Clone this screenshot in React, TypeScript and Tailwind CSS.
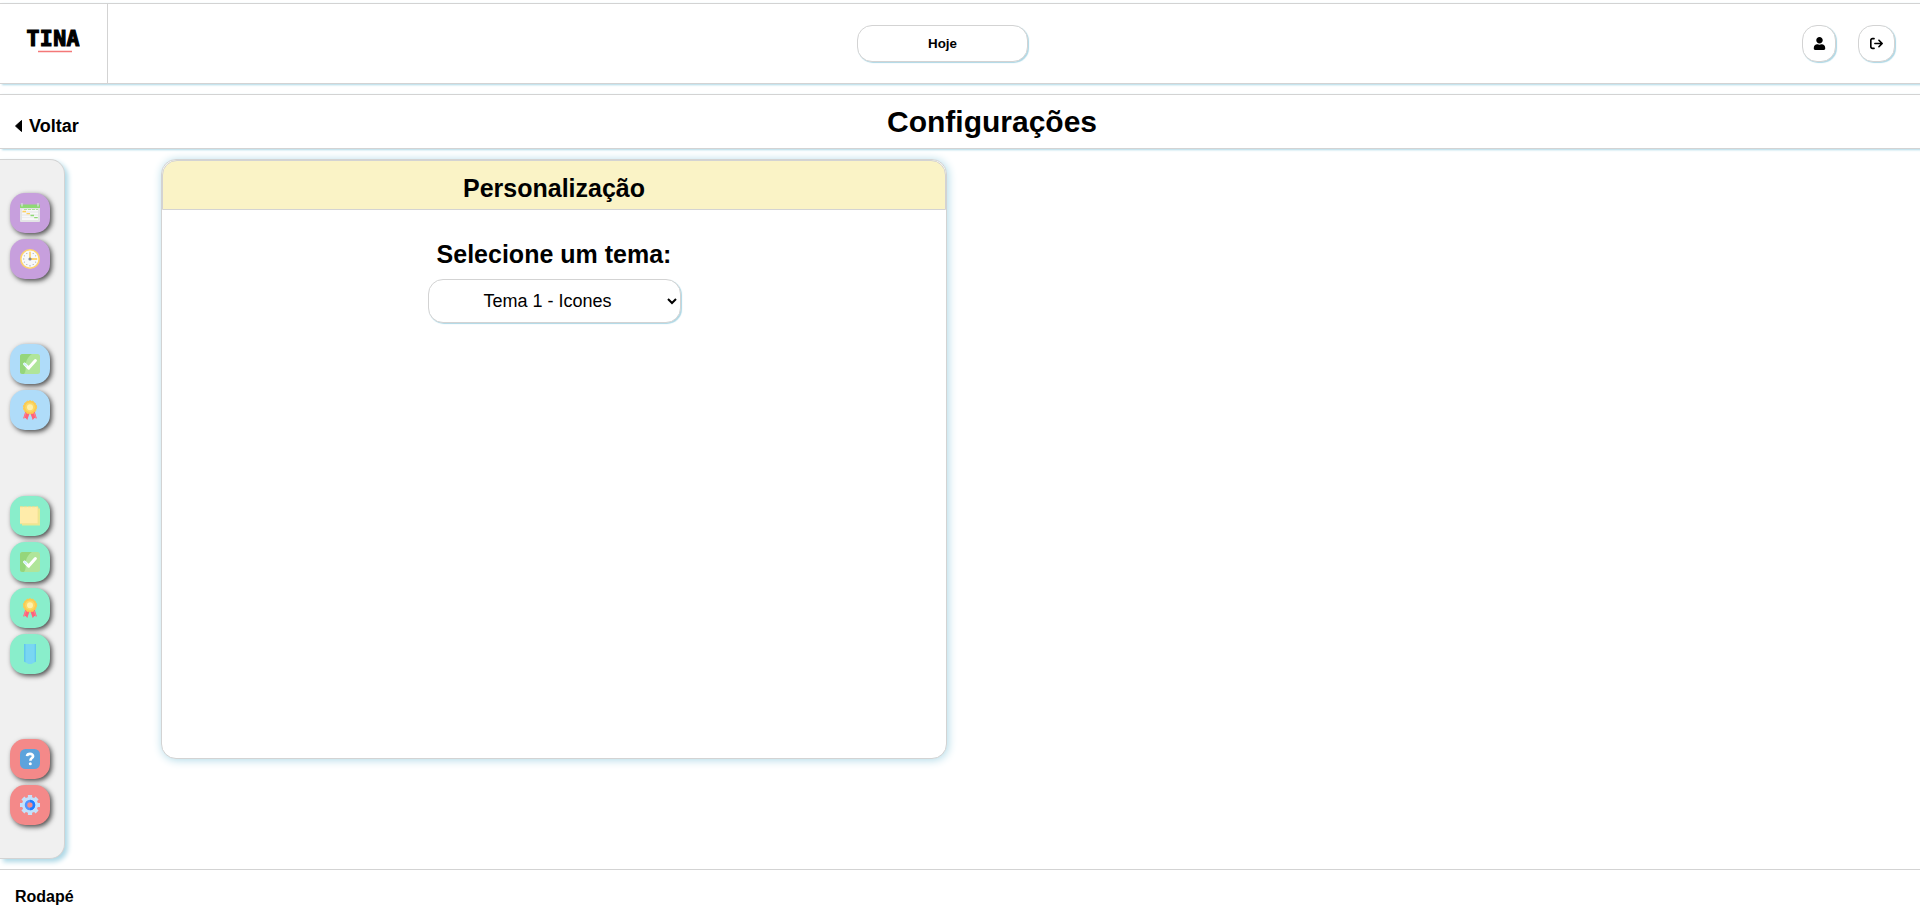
import type { ReactNode } from "react";
import { FaUser } from "react-icons/fa";
import { FaArrowRightFromBracket } from "react-icons/fa6";

const CalendarIcon = () => (
  <svg viewBox="0 0 20 20" className="size-5">
    <rect y="2" width="20" height="17" rx="1" fill="#e3e4e6" />
    <path d="M2 7.500h16M2 10.500h16M2 13.500h16M2 16h16" stroke="#f7f7f8" strokeWidth="1.800" />
    <rect y="1.500" width="20" height="3.500" rx=".5" fill="#8fd975" />
    <path d="M2 0v3.500M18 0v3.500" stroke="#d9dde0" strokeWidth="1.300" />
    <path d="M4 6.500h3M8 6.500h3M12 6.500h3M16 6.500h2" stroke="#9cdd84" strokeWidth=".800" />
    <path d="M2.500 8.500h3.500M6.500 10.700h3.500" stroke="#ffd15c" strokeWidth="1.300" />
    <path d="M10.500 12.500h3.500M14.200 14.600h3.500" stroke="#8fd975" strokeWidth="1.300" />
  </svg>
);

const ClockIcon = () => (
  <svg viewBox="0 0 20 20" className="size-5">
    <circle cx="10" cy="10" r="9.2" fill="#f7f8fa" stroke="#ffd46b" strokeWidth="1.6" />
    <g stroke="#a9adb5" strokeWidth="1">
      <path d="M10 16v1.5M3 10h1.3M6.5 4l.6 1M3.9 6.5l1 .6M3.9 13.5l1-.6M6.5 16l.6-1M13.5 16l-.6-1M16.1 13.5l-1-.6M16.1 6.5l-1 .6M13.5 4l-.6 1" />
    </g>
    <path d="M10 2.7V10h7.2" fill="none" stroke="#ffc843" strokeWidth="1.3" />
    <circle cx="10" cy="10" r="1.6" fill="#868b98" />
  </svg>
);

const CheckIcon = () => (
  <svg viewBox="0 0 20 20" className="size-5">
    <rect width="20" height="20" rx="2.5" fill="#b0e59a" />
    <path d="M2.5 0H12C9 2 5.7 6 5.7 11c0 4 .2 7-1.7 9H2.5A2.5 2.5 0 0 1 0 17.5V2.5A2.5 2.5 0 0 1 2.5 0Z" fill="#95d67b" />
    <path d="m4.600 10 4.100 4.100 6.700-7.500" fill="none" stroke="#fff" strokeWidth="3" strokeLinecap="round" strokeLinejoin="round" />
    <path d="m4.400 9.700 1.900 1.900" stroke="#d3f1fb" strokeWidth="2" strokeLinecap="round" />
  </svg>
);

const MedalIcon = () => (
  <svg viewBox="0 0 20 20" className="size-5">
    <path d="m5.500 11-2.400 7.500 2.500-.500 1.700 2 2.700-8Z" fill="#ff637b" />
    <path d="m14.500 11 2.400 7.500-2.500-.500-1.700 2-2.700-8Z" fill="#ff637b" />
    <path d="m5.800 13-1.500 5M14.200 13l1.500 5" stroke="#f98594" strokeWidth="1" />
    <circle cx="10" cy="7.300" r="6.600" fill="#fdcb50" stroke="#fdcb50" strokeWidth="1" strokeDasharray="2 1" />
    <circle cx="10" cy="7.200" r="4.800" fill="#fbd968" />
    <circle cx="10" cy="7.200" r="3" fill="#fff0aa" />
  </svg>
);

const NoteIcon = () => (
  <svg viewBox="0 0 20 20" className="size-5">
    <path d="M2 2.500h18v17H2z" fill="#e8e993" />
    <path d="M0 .700h18v17H0z" fill="#ffecaa" />
    <path d="M0 .700h18" stroke="#e5df94" strokeWidth="1" strokeDasharray="3 1" />
    <path d="M18 1v16.700H0" fill="none" stroke="#f4df91" strokeWidth=".800" />
  </svg>
);

const BookmarkIcon = () => (
  <svg viewBox="0 0 20 20" className="size-5">
    <path d="M4 0h12v17.500L11.500 20h-3L4 17.500Z" fill="#79d6f2" />
    <path d="M4 0h1.500v18.300L4 17.500ZM14.700 0H16v17.500l-1.300.800Z" fill="#62c7ee" />
  </svg>
);

const HelpIcon = () => (
  <svg viewBox="0 0 20 20" className="size-5">
    <rect width="20" height="20" rx="5.500" fill="#5da3dc" />
    <path d="M7 7.200C7.200 5.500 8.500 4.900 10.100 4.900c1.700 0 3 .900 3 2.300 0 1.900-2.700 2-2.700 4.500" fill="none" stroke="#fff" strokeWidth="2.600" />
    <circle cx="10.300" cy="14.800" r="1.500" fill="#fff" />
  </svg>
);

const GearIcon = () => (
  <svg viewBox="0 0 20 20" className="size-5">
    <g stroke="#c3e1fb" strokeWidth="4.200">
      <path d="M10 0v5M10 15v5M0 10h5M15 10h5M2.900 2.900l3.500 3.500M13.600 13.600l3.500 3.500M2.900 17.100l3.500-3.500M13.600 6.400l3.500-3.500" />
    </g>
    <circle cx="10" cy="10" r="6" fill="none" stroke="#c3e1fb" strokeWidth="4" />
    <circle cx="10" cy="10" r="4" fill="none" stroke="#5094ff" strokeWidth="2.500" />
    <path d="M10 6a4 4 0 0 1 0 8" fill="none" stroke="#1e7cff" strokeWidth="2.500" />
  </svg>
);

const groups: { color: string; icons: ReactNode[] }[] = [
  { color: "bg-[#c79fdd]", icons: [<CalendarIcon />, <ClockIcon />] },
  { color: "bg-[#afdcf9]", icons: [<CheckIcon />, <MedalIcon />] },
  { color: "bg-[#89eecb]", icons: [<NoteIcon />, <CheckIcon />, <MedalIcon />, <BookmarkIcon />] },
  { color: "bg-[#f48989]", icons: [<HelpIcon />, <GearIcon />] },
];

const pill =
  "flex h-[37px] items-center justify-center rounded-[15px] border border-[lightgray] bg-white shadow-[1px_1px_1px_0px_lightblue]";

export default function App() {
  return (
    <div className="flex h-[909px] flex-col overflow-hidden bg-white pt-[3px] font-['Liberation_Sans',Arial,sans-serif] text-black">
      <header className="flex h-[81px] shrink-0 border-y border-[lightgray] shadow-[2px_1px_2px_0px_lightblue]">
        <div className="flex w-[108px] items-start border-r border-[lightgray] pt-[22px] pl-[26px]">
          <svg viewBox="0 0 54 30" className="h-[30px] w-[54px]" aria-label="TINA">
            <text
              x="0.500"
              y="20"
              fontSize="21.500"
              fontWeight="700"
              fontFamily="DejaVu Sans Mono, monospace"
              textLength="53"
              stroke="#000"
              strokeWidth="1.200"
            >
              TINA
            </text>
            <path d="M12 25.500h34" stroke="#f47878" strokeWidth="1.700" />
          </svg>
        </div>
        <div className="flex flex-1 items-start pt-[21px] pr-[25px]">
          <button className={`${pill} ml-[749px] w-[171px] text-[13.333px] font-bold`}>Hoje</button>
          <button className={`${pill} ml-auto w-[34px]`} aria-label="Perfil">
            <FaUser size={13} />
          </button>
          <button className={`${pill} ml-[22px] w-[37px]`} aria-label="Sair">
            <FaArrowRightFromBracket size={13} />
          </button>
        </div>
      </header>

      <div className="mt-[10px] flex h-[55px] shrink-0 border-y border-[lightgray] shadow-[2px_1px_2px_0px_lightblue]">
        <a className="flex w-[108px] items-center pt-[9px] pl-[15px] text-[18px] font-bold">
          <svg viewBox="0 0 7 12" className="mr-[7px] h-3 w-[7px]">
            <path d="M6.500.500v11L.500 6Z" stroke="#000" strokeLinejoin="round" />
          </svg>
          Voltar
        </a>
        <h1 className="ml-[779px] pt-[10px] text-[30px] leading-[34px] font-bold">Configurações</h1>
      </div>

      <main className="mt-[10px] flex h-[700px] shrink-0">
        <nav className="flex w-[65px] flex-col justify-around rounded-r-[15px] border border-l-0 border-[lightgray] bg-[#f0f0f0] pl-[10px] shadow-[3px_3px_5px_0px_lightblue]">
          {groups.map((group, i) => (
            <div key={i} className="flex flex-col gap-[6px]">
              {group.icons.map((icon, j) => (
                <button
                  key={j}
                  className={`${group.color} flex size-10 items-center justify-center rounded-[15px] shadow-[2px_2px_5px_0px_#000000b0]`}
                >
                  {icon}
                </button>
              ))}
            </div>
          ))}
        </nav>

        <section className="ml-24 flex h-[600px] w-[786px] flex-col items-center rounded-[15px] border border-[lightgray] bg-white shadow-[1px_1px_10px_0px_lightblue]">
          <h2 className="h-[50px] w-full rounded-t-[15px] border border-[lightgray] bg-[#faf3c6] pt-[12px] text-center text-[25px] leading-[30px] font-bold">
            Personalização
          </h2>
          <label htmlFor="tema" className="mt-[29px] text-[25px] leading-[30px] font-bold">
            Selecione um tema:
          </label>
          <select
            id="tema"
            className="mt-[10px] h-[44px] w-[253px] rounded-[15px] border border-[lightgray] bg-white pr-px pb-px text-center text-[18px] shadow-[1px_1px_1px_0px_lightblue]"
          >
            <option>Tema 1 - Icones</option>
          </select>
        </section>
      </main>

      <footer className="mt-[10px] flex-1 border-t border-[lightgray] pt-[17px] pl-[15px] text-[16px] leading-[20px] font-bold">
        Rodapé
      </footer>
    </div>
  );
}
